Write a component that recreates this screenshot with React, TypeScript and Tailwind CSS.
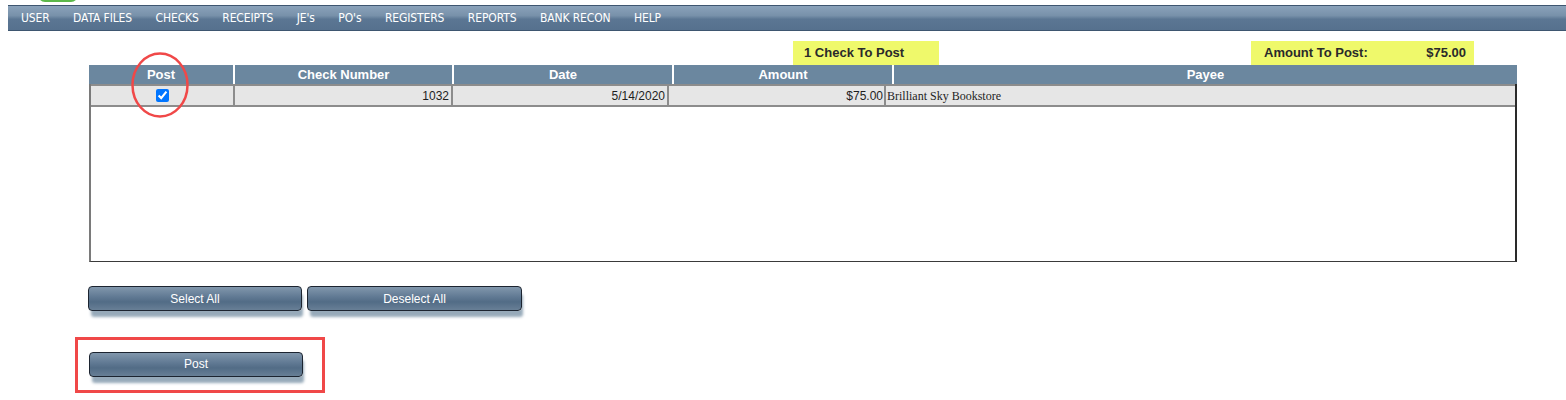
const navItems = ["USER", "DATA FILES", "CHECKS", "RECEIPTS", "JE's", "PO's", "REGISTERS", "REPORTS", "BANK RECON", "HELP"];

const headCols = [
  { label: "Post", w: "w-[146px]" },
  { label: "Check Number", w: "w-[219px]" },
  { label: "Date", w: "w-[220px]" },
  { label: "Amount", w: "w-[220px]" },
  { label: "Payee", w: "flex-1" },
];

function Btn({ label, w }: { label: string; w: string }) {
  return (
    <button
      className={`${w} h-[25px] rounded-[4px] border border-[#1c2430] text-white text-[12px] bg-[linear-gradient(to_bottom,#8197ac_0%,#5f7892_45%,#526c86_65%,#687f96_100%)] shadow-[2px_7px_3px_-1px_#97aaba]`}
      style={{ fontFamily: '"Liberation Sans", Arial, sans-serif' }}
    >
      {label}
    </button>
  );
}

export default function App() {
  return (
    <div className="relative w-[1566px] h-[400px] bg-white overflow-hidden" style={{ fontFamily: '"Liberation Sans", Arial, sans-serif' }}>
      {/* logo sliver */}
      <div className="h-[5px] overflow-hidden pl-[38px]">
        <div className="w-[40px] h-[14px] -mt-[12px] rounded-full bg-[#5cb84a]" />
      </div>

      {/* nav */}
      <nav
        className="ml-[8px] h-[26px] flex items-center pl-[13px] border-y border-[#3e5670] bg-[linear-gradient(to_bottom,#8aa2ba_0%,#7891aa_40%,#5b7693_55%,#56718e_100%)]"
        style={{ fontFamily: '"Liberation Sans Narrow", "DejaVu Sans Condensed", "Liberation Sans", sans-serif' }}
      >
        {navItems.map((n) => (
          <span key={n} className="text-white text-[12px] tracking-[-0.12px] mr-[23.5px] whitespace-nowrap">
            {n}
          </span>
        ))}
      </nav>

      {/* totals */}
      <div className="flex mt-[10px] h-[24px] text-[13px] font-bold text-[#2a2a2a]">
        <div className="ml-[793px] w-[146px] bg-[#eff96b] pl-[11px] flex items-center">1 Check To Post</div>
        <div className="ml-[312px] w-[223px] bg-[#eff96b] pl-[13px] pr-[8px] flex items-center justify-between">
          <span>Amount To Post:</span>
          <span>$75.00</span>
        </div>
      </div>

      {/* table */}
      <div className="ml-[89px] w-[1428px] h-[197px] border-x-2 border-b border-x-[#7a7a7a] border-b-[#3a3a3a] border-r-[#2a2a2a]">
        <div className="flex h-[19px] bg-[#6b879f] -mx-[2px]">
          {headCols.map((c, i) => (
            <div
              key={c.label}
              className={`${c.w} ${i < headCols.length - 1 ? "border-r-2 border-white" : ""} flex items-center justify-center text-white text-[13px] font-bold`}
            >
              {c.label}
            </div>
          ))}
        </div>
        <div className="flex h-[23px] bg-[#e6e6e6] border-y-2 border-[#8c8c8c] text-[12px] text-[#1e1e1e]">
          <div className="w-[144px] border-r-2 border-[#8c8c8c] flex items-center justify-center">
            <input type="checkbox" defaultChecked className="w-[13px] h-[13px] accent-[#0075ff]" />
          </div>
          <div className="w-[218px] border-r-2 border-[#8c8c8c] flex items-center justify-end pr-[2px]">1032</div>
          <div className="w-[216px] border-r-2 border-[#8c8c8c] flex items-center justify-end pr-[2px]">5/14/2020</div>
          <div className="w-[217px] border-r-2 border-[#8c8c8c] flex items-center justify-end pr-[1px]">$75.00</div>
          <div className="flex-1 flex items-center pl-[1px]" style={{ fontFamily: '"Liberation Serif", "Times New Roman", serif' }}>
            Brilliant Sky Bookstore
          </div>
        </div>
      </div>

      {/* select buttons */}
      <div className="flex gap-[5px] ml-[88px] mt-[24px]">
        <Btn label="Select All" w="w-[214px]" />
        <Btn label="Deselect All" w="w-[215px]" />
      </div>

      {/* post */}
      <div className="ml-[75px] mt-[26px] w-[250px] h-[56px] border-[3px] border-[#f04848] pt-[11px] pl-[11px]">
        <Btn label="Post" w="w-[214px]" />
      </div>

      {/* annotation ellipse */}
      <svg className="absolute left-[130px] top-[51px] pointer-events-none" width="60" height="68" viewBox="0 0 60 68">
        <ellipse cx="30" cy="34" rx="27.5" ry="31.5" fill="none" stroke="#f04848" strokeWidth="2.5" />
      </svg>
    </div>
  );
}
